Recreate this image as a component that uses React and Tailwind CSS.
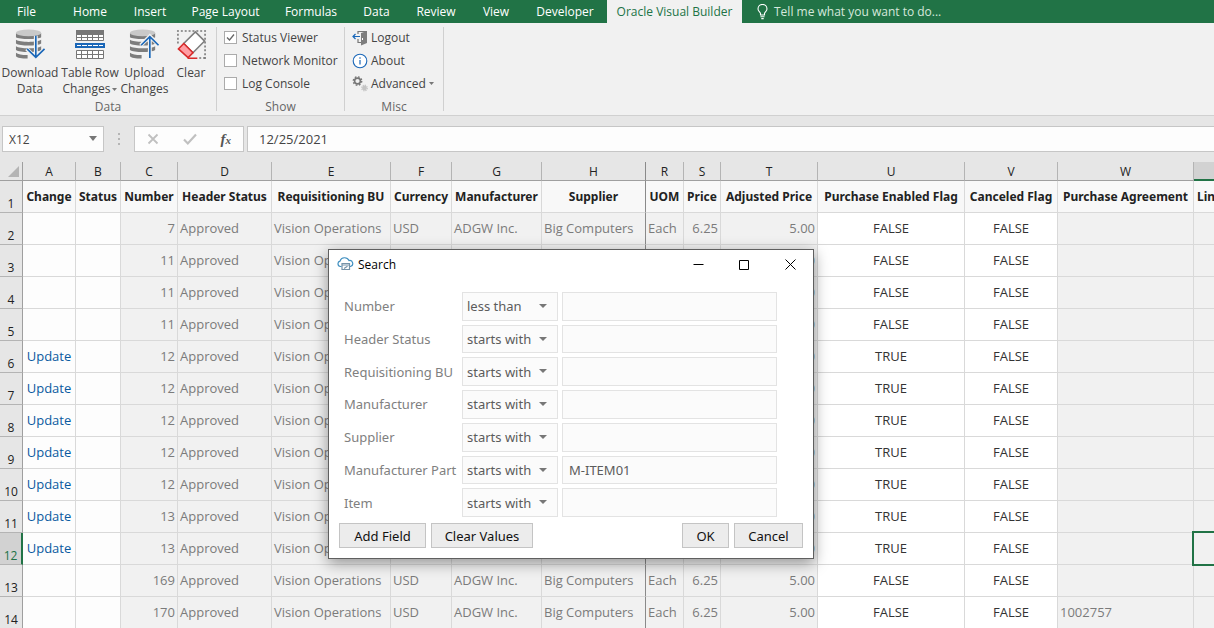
import { useState } from "react";

const TABS = [
  { label: "File", width: "w-[53px] mr-[6px]" },
  { label: "Home", width: "w-[62px]" },
  { label: "Insert", width: "w-[58px]" },
  { label: "Page Layout", width: "w-[93px]" },
  { label: "Formulas", width: "w-[78px]" },
  { label: "Data", width: "w-[53px]" },
  { label: "Review", width: "w-[66px]" },
  { label: "View", width: "w-[54px]" },
  { label: "Developer", width: "w-[84px]" },
  { label: "Oracle Visual Builder", width: "w-[135px]", active: true },
];

// Editable columns are white, read-only columns are gray.
const COLUMNS = [
  { letter: "A", title: "Change", width: "w-[53px]", cell: "bg-[#fdfdfd] text-center text-[#0a5aa0]" },
  { letter: "B", title: "Status", width: "w-[45px]", cell: "bg-[#fdfdfd]" },
  { letter: "C", title: "Number", width: "w-[57px]", cell: "bg-[#f1f1f1] text-right" },
  { letter: "D", title: "Header Status", width: "w-[94px]", cell: "bg-[#f1f1f1]" },
  { letter: "E", title: "Requisitioning BU", width: "w-[119px]", cell: "bg-[#f1f1f1]" },
  { letter: "F", title: "Currency", width: "w-[61px]", cell: "bg-[#f1f1f1]" },
  { letter: "G", title: "Manufacturer", width: "w-[90px]", cell: "bg-[#f1f1f1]" },
  { letter: "H", title: "Supplier", width: "w-[104px]", cell: "bg-[#f1f1f1]", frozen: true },
  { letter: "R", title: "UOM", width: "w-[38px]", cell: "bg-[#f1f1f1]" },
  { letter: "S", title: "Price", width: "w-[37px]", cell: "bg-[#f1f1f1] text-right" },
  { letter: "T", title: "Adjusted Price", width: "w-[97px]", cell: "bg-[#f1f1f1] text-right" },
  { letter: "U", title: "Purchase Enabled Flag", width: "w-[147px]", cell: "bg-white text-center text-[#333333]" },
  { letter: "V", title: "Canceled Flag", width: "w-[93px]", cell: "bg-white text-center text-[#333333]" },
  { letter: "W", title: "Purchase Agreement", width: "w-[136px]", cell: "bg-[#f1f1f1]" },
];

const ROWS = [
  { change: "", number: "7", enabled: "FALSE" },
  { change: "", number: "11", enabled: "FALSE" },
  { change: "", number: "11", enabled: "FALSE" },
  { change: "", number: "11", enabled: "FALSE" },
  { change: "Update", number: "12", enabled: "TRUE" },
  { change: "Update", number: "12", enabled: "TRUE" },
  { change: "Update", number: "12", enabled: "TRUE" },
  { change: "Update", number: "12", enabled: "TRUE" },
  { change: "Update", number: "12", enabled: "TRUE" },
  { change: "Update", number: "13", enabled: "TRUE" },
  { change: "Update", number: "13", enabled: "TRUE" },
  { change: "", number: "169", enabled: "FALSE" },
  { change: "", number: "170", enabled: "FALSE", agreement: "1002757" },
];

const SELECTED_ROW = 12;

const FIELDS = [
  { id: "number", label: "Number", operator: "less than", value: "" },
  { id: "header-status", label: "Header Status", operator: "starts with", value: "" },
  { id: "requisitioning-bu", label: "Requisitioning BU", operator: "starts with", value: "" },
  { id: "manufacturer", label: "Manufacturer", operator: "starts with", value: "" },
  { id: "supplier", label: "Supplier", operator: "starts with", value: "" },
  { id: "manufacturer-part", label: "Manufacturer Part", operator: "starts with", value: "M-ITEM01" },
  { id: "item", label: "Item", operator: "starts with", value: "" },
];

function rowCells(row) {
  return [
    row.change,
    "",
    row.number,
    "Approved",
    "Vision Operations",
    "USD",
    "ADGW Inc.",
    "Big Computers",
    "Each",
    "6.25",
    "5.00",
    row.enabled,
    "FALSE",
    row.agreement || "",
  ];
}

export default function App() {
  return (
    <div className="relative h-screen w-full overflow-hidden bg-[#e6e6e6] font-['Open_Sans',sans-serif] text-[#444444]">
      <TabBar />
      <Ribbon />
      <FormulaBar />
      <Sheet />
      <SearchDialog />
    </div>
  );
}

function TabBar() {
  return (
    <nav className="flex h-[23px] items-stretch bg-[#217346] text-[12px] leading-4 text-white">
      {TABS.map((tab) => (
        <button
          key={tab.label}
          type="button"
          className={`${tab.width} shrink-0 whitespace-nowrap ${tab.active ? "bg-[#f1f1f1] text-[#217346]" : ""}`}
        >
          {tab.label}
        </button>
      ))}
      <button type="button" className="ml-[15px] flex shrink-0 items-center gap-[6px] text-[#d5e8dc]">
        <BulbIcon />
        Tell me what you want to do...
      </button>
    </nav>
  );
}

function Ribbon() {
  return (
    <div className="flex h-[93px] border-b border-[#d0d0d0] bg-[#f1f1f1] pt-1 text-[12px] leading-4">
      <RibbonGroup label="Data" className="w-[217px]">
        <div className="flex">
          <BigButton icon={<DownloadIcon />} lines={["Download", "Data"]} className="w-[60px]" />
          <BigButton icon={<TableIcon />} lines={["Table Row", "Changes"]} menu className="w-[60px]" />
          <BigButton icon={<UploadIcon />} lines={["Upload", "Changes"]} className="w-[49px]" />
          <BigButton icon={<EraserIcon />} lines={["Clear"]} className="w-[44px]" />
        </div>
      </RibbonGroup>
      <RibbonGroup label="Show" className="w-[128px]">
        <div className="flex flex-col pl-[7px]">
          <CheckItem label="Status Viewer" defaultChecked />
          <CheckItem label="Network Monitor" />
          <CheckItem label="Log Console" />
        </div>
      </RibbonGroup>
      <RibbonGroup label="Misc" className="w-[99px]">
        <div className="flex flex-col pl-[7px]">
          <SmallButton icon={<LogoutIcon />} label="Logout" />
          <SmallButton icon={<InfoIcon />} label="About" />
          <SmallButton icon={<GearsIcon />} label="Advanced" menu />
        </div>
      </RibbonGroup>
    </div>
  );
}

function RibbonGroup({ label, className, children }) {
  return (
    <section className={`${className} flex h-[84px] shrink-0 flex-col justify-between border-r border-[#d0d0d0]`}>
      {children}
      <div className="text-center leading-2 text-[#666666]">{label}</div>
    </section>
  );
}

function BigButton({ icon, lines, menu, className }) {
  return (
    <button type="button" className={`${className} flex shrink-0 flex-col items-center whitespace-nowrap pt-[2px]`}>
      {icon}
      <span className="mt-[5px]">{lines[0]}</span>
      <span className="flex items-center gap-[2px]">
        {lines[1]}
        {menu && <Caret className="h-[3px] w-[5px]" />}
      </span>
    </button>
  );
}

function CheckItem({ label, defaultChecked }) {
  return (
    <label className="flex h-[23px] items-center gap-[5px] whitespace-nowrap pb-[2px]">
      <span className="relative h-[13px] w-[13px]">
        <input
          type="checkbox"
          defaultChecked={defaultChecked}
          className="peer block h-[13px] w-[13px] appearance-none border border-[#ababab] bg-white"
        />
        <svg viewBox="0 0 13 13" className="pointer-events-none absolute inset-0 hidden h-[13px] w-[13px] peer-checked:block">
          <path d="M3 6.5 5.5 9 10 3.5" fill="none" stroke="#666" strokeWidth="1.3" />
        </svg>
      </span>
      {label}
    </label>
  );
}

function SmallButton({ icon, label, menu }) {
  return (
    <button type="button" className="flex h-[23px] items-center gap-[3px] whitespace-nowrap pb-[2px]">
      {icon}
      {label}
      {menu && <Caret className="h-[3px] w-[5px]" />}
    </button>
  );
}

function FormulaBar() {
  return (
    <div className="flex h-[46px] items-start pl-[2px] pt-[10px] text-[12px] leading-4">
      <div className="relative">
        <input
          aria-label="Name box"
          defaultValue="X12"
          className="block h-[26px] w-[102px] border border-[#c6c6c6] bg-[#fdfdfd] pl-[6px]"
        />
        <Caret className="absolute right-[7px] top-[10px] h-[5px] w-[8px]" />
      </div>
      <div className="flex h-[26px] w-[30px] flex-col items-center justify-center gap-[3px]">
        <i className="h-[2px] w-[2px] bg-[#b5b5b5]" />
        <i className="h-[2px] w-[2px] bg-[#b5b5b5]" />
        <i className="h-[2px] w-[2px] bg-[#b5b5b5]" />
      </div>
      <div className="flex h-[26px] w-[110px] items-center justify-around border border-[#c6c6c6] bg-[#fdfdfd]">
        <button type="button" aria-label="Cancel entry">
          <svg width="12" height="12" viewBox="0 0 12 12">
            <path d="M1.5 1.5 10.5 10.5M10.5 1.5 1.5 10.5" stroke="#c0c0c0" strokeWidth="1.8" />
          </svg>
        </button>
        <button type="button" aria-label="Enter">
          <svg width="14" height="12" viewBox="0 0 14 12">
            <path d="M1 6.5 4.8 10.4 13 1.5" fill="none" stroke="#c0c0c0" strokeWidth="2.2" />
          </svg>
        </button>
        <button type="button" className="font-['Liberation_Serif',serif] text-[15px] font-bold italic text-[#555555]">
          f<span className="text-[11px]">x</span>
        </button>
      </div>
      <input
        aria-label="Formula"
        defaultValue="12/25/2021"
        className="ml-[3px] h-[26px] min-w-0 flex-1 border border-r-0 border-[#c6c6c6] bg-[#fdfdfd] pl-[11px] text-[13px]"
      />
    </div>
  );
}

function Sheet() {
  return (
    <table className="w-full table-fixed border-separate border-spacing-0 whitespace-nowrap text-[13px] leading-4">
      <colgroup>
        <col className="w-[23px]" />
        {COLUMNS.map((col) => (
          <col key={col.letter} className={col.width} />
        ))}
        <col />
      </colgroup>
      <thead>
        <tr className="h-[19px] text-[12px] text-[#222222]">
          <th className="border-b border-r border-[#9f9f9f] p-0">
            <svg viewBox="0 0 12 12" className="ml-auto mr-[3px] h-[11px] w-[11px]">
              <path d="M12 0V12H0Z" fill="#b4b4b4" />
            </svg>
          </th>
          {COLUMNS.map((col) => (
            <th
              key={col.letter}
              className={`border-b border-r border-b-[#9f9f9f] p-0 pt-[2px] font-normal ${col.frozen ? "border-r-[#8a8a8a]" : "border-r-[#b4b4b4]"}`}
            >
              {col.letter}
            </th>
          ))}
          <th className="border-b-2 border-[#217346] bg-[#d2d2d2] p-0" />
        </tr>
      </thead>
      <tbody>
        <tr className="h-8">
          <RowNumber n={1} />
          {COLUMNS.map((col) => (
            <th
              key={col.letter}
              className={`border-b border-r border-b-[#d9d9d9] bg-[#f8f8f8] p-0 font-['Noto_Sans',sans-serif] text-[12px] font-bold text-[#222222] ${col.frozen ? "border-r-[#8a8a8a]" : "border-r-[#d9d9d9]"}`}
            >
              {col.title}
            </th>
          ))}
          <th className="overflow-hidden border-b border-[#d9d9d9] bg-[#f8f8f8] p-0 pl-[3px] text-left font-['Noto_Sans',sans-serif] text-[12px] font-bold text-[#222222]">
            Lin
          </th>
        </tr>
        {ROWS.map((row, i) => (
          <tr key={i} className="h-8 text-[#7b7b7b]">
            <RowNumber n={i + 2} />
            {rowCells(row).map((text, c) => (
              <td
                key={c}
                className={`border-b border-r border-b-[#d9d9d9] px-[2px] pb-[2px] pt-0 ${COLUMNS[c].cell} ${COLUMNS[c].frozen ? "border-r-[#8a8a8a]" : "border-r-[#d9d9d9]"}`}
              >
                {text}
              </td>
            ))}
            <td className="relative border-b border-[#d9d9d9] bg-[#f1f1f1] p-0">
              {i + 2 === SELECTED_ROW && (
                <div className="absolute -bottom-[2px] -left-[2px] -top-[2px] right-0 z-10 border-y-2 border-l-2 border-[#217346]" />
              )}
            </td>
          </tr>
        ))}
      </tbody>
    </table>
  );
}

function RowNumber({ n }) {
  return (
    <th
      className={`border-b border-b-[#b4b4b4] p-0 align-bottom text-[12px] font-normal ${
        n === SELECTED_ROW
          ? "border-r-2 border-r-[#217346] bg-[#d2d2d2] text-[#217346]"
          : "border-r border-r-[#9f9f9f] text-[#222222]"
      }`}
    >
      {n}
    </th>
  );
}

function SearchDialog() {
  const [fields, setFields] = useState(FIELDS);

  const update = (id, patch) =>
    setFields((list) => list.map((f) => (f.id === id ? { ...f, ...patch } : f)));

  const clearValues = () => setFields((list) => list.map((f) => ({ ...f, value: "" })));

  return (
    <div
      role="dialog"
      aria-label="Search"
      className="absolute left-[328px] top-[249px] z-20 w-[486px] border border-[#5f5f5f] bg-white font-['Noto_Sans',sans-serif] shadow-[0_4px_14px_rgba(0,0,0,0.4)]"
    >
      <header className="flex h-[29px] items-center pl-[8px] text-[12px] text-black">
        <CloudIcon />
        <h2 className="ml-[4px] flex-1 font-['Open_Sans',sans-serif]">Search</h2>
        <WindowButton label="Minimize" d="M0.5 5.5H10.5" />
        <WindowButton label="Maximize" d="M0.5 1.5H9.5V10.5H0.5Z" />
        <WindowButton label="Close" d="M0.5 0.5 10.5 10.5M10.5 0.5 0.5 10.5" />
      </header>
      <div className="mt-[13px] grid h-[225px] grid-rows-7 gap-1 pl-[15px] pr-[36px] text-[13px] leading-4">
        {fields.map((f) => (
          <div key={f.id} className="flex items-stretch">
            <label htmlFor={f.id} className="flex w-[118px] items-center whitespace-nowrap text-[#808080]">
              {f.label}
            </label>
            <div className="relative w-[96px]">
              <select
                aria-label={`${f.label} operator`}
                value={f.operator}
                onChange={(e) => update(f.id, { operator: e.target.value })}
                className="h-full w-full appearance-none border border-[#e3e3e3] bg-[#fbfbfb] pl-[4px] text-[#5c5c5c]"
              >
                <option>starts with</option>
                <option>less than</option>
              </select>
              <Caret className="pointer-events-none absolute right-[11px] top-[12px] h-[4px] w-[8px]" />
            </div>
            <input
              id={f.id}
              value={f.value}
              onChange={(e) => update(f.id, { value: e.target.value })}
              className="ml-1 min-w-0 flex-1 border border-[#e3e3e3] bg-[#fbfbfb] px-[6px] text-[#5c5c5c]"
            />
          </div>
        ))}
      </div>
      <footer className="flex gap-[5px] px-[10px] pb-[10px] pt-[6px] text-[13px] leading-4 text-[#111111]">
        <DialogButton className="w-[87px]">Add Field</DialogButton>
        <DialogButton className="mr-auto w-[102px]" onClick={clearValues}>
          Clear Values
        </DialogButton>
        <DialogButton className="w-[47px]">OK</DialogButton>
        <DialogButton className="w-[69px]">Cancel</DialogButton>
      </footer>
    </div>
  );
}

function DialogButton({ className, onClick, children }) {
  return (
    <button
      type="button"
      onClick={onClick}
      className={`${className} h-[25px] whitespace-nowrap border border-[#c4c4c4] bg-[#ececec]`}
    >
      {children}
    </button>
  );
}

function WindowButton({ label, d }) {
  return (
    <button type="button" aria-label={label} className="flex h-full w-[46px] items-center justify-center">
      <svg width="11" height="11" viewBox="0 0 11 11">
        <path d={d} fill="none" stroke="#000" />
      </svg>
    </button>
  );
}

function Caret({ className }) {
  return (
    <svg viewBox="0 0 8 5" preserveAspectRatio="none" className={className}>
      <path d="M0 0H8L4 5Z" fill="#777" />
    </svg>
  );
}

function BulbIcon() {
  return (
    <svg width="11" height="16" viewBox="0 0 11 16" fill="none" stroke="#fff" strokeWidth="1.1">
      <path d="M3.5 11V9.3C3 8 1 7 1 4.9A4.4 4.4 0 0 1 10 4.9C10 7 8 8 7.5 9.3V11Z" />
      <path d="M3.5 12.8H7.5M4.3 14.6H6.7" />
    </svg>
  );
}

function Cylinder() {
  return (
    <>
      <path d="M1 4V8.5C4 11 24 11 27 8.5V4Z" fill="#7d7d7d" />
      <ellipse cx="14" cy="4" rx="13" ry="3.4" fill="#c9c9c9" />
      <path d="M1 11.2C5 14 23 14 27 11.2V15C23 17.8 5 17.8 1 15Z" fill="#7d7d7d" />
      <path d="M1 17.8C5 20.6 23 20.6 27 17.8V21.6C23 24.4 5 24.4 1 21.6Z" fill="#7d7d7d" />
      <path d="M1 24.4C3 26.2 8 27 13 26.9V30.5C7 30.5 2 29.6 1 28Z" fill="#7d7d7d" />
    </>
  );
}

function DownloadIcon() {
  return (
    <svg width="31" height="31" viewBox="0 0 32 32" fill="none">
      <Cylinder />
      <path d="M21.5 7V29M12 20.5 21.5 29.5 31 20.5" stroke="#f1f1f1" strokeWidth="4" />
      <path d="M21.5 7V29M12.5 20.5 21.5 29.3 30.5 20.5" stroke="#1a67b8" strokeWidth="1.7" />
    </svg>
  );
}

function UploadIcon() {
  return (
    <svg width="31" height="31" viewBox="0 0 32 32" fill="none">
      <Cylinder />
      <path d="M21.5 30V8M12 17 21.5 7.5 31 17" stroke="#f1f1f1" strokeWidth="4" />
      <path d="M21.5 30V8M12.5 16.8 21.5 7.8 30.5 16.8" stroke="#1a67b8" strokeWidth="1.7" />
    </svg>
  );
}

function TableIcon() {
  return (
    <svg width="31" height="31" viewBox="0 0 31 31" fill="none">
      <path d="M1 2H29V12H1ZM1 21H29V30H1Z" fill="#fff" />
      <path d="M1 1H29V6H1Z" fill="#777" />
      <path d="M1.5 2.5H28.5V11.5H1.5ZM1.5 8.5H28.5M6.5 5V12M12.5 5V12M17.5 5V12M23.5 5V12" stroke="#777" />
      <path d="M1 15H29V18H1Z" fill="#fff" stroke="#1a67b8" strokeWidth="2" />
      <path d="M6.5 14V19M12.5 14V19M17.5 14V19M23.5 14V19" stroke="#1a67b8" />
      <path d="M1.5 21.5H28.5V29.5H1.5ZM1.5 25.5H28.5M6.5 21V30M12.5 21V30M17.5 21V30M23.5 21V30" stroke="#777" />
    </svg>
  );
}

function EraserIcon() {
  return (
    <svg width="31" height="31" viewBox="0 0 32 32" fill="none">
      <path d="M1 2H31" stroke="#777" strokeWidth="1.6" strokeDasharray="2 2" />
      <path d="M2 5V15M30 5V31M24 30H31" stroke="#777" strokeWidth="1.6" strokeDasharray="2 2" />
      <path d="M20 3 29.5 12.5 17.5 24.5 8 15Z" fill="#fff" stroke="#7d7d7d" strokeWidth="1.6" />
      <path d="M8 15 17.5 24.5 12.5 29.5 2.5 20.5Z" fill="#ff9da3" stroke="#d92b2b" strokeWidth="1.6" />
      <path d="M12 30.2H22" stroke="#d92b2b" strokeWidth="1.6" />
    </svg>
  );
}

function LogoutIcon() {
  return (
    <svg width="16" height="16" viewBox="0 0 16 16" fill="none">
      <path d="M6 4V1.5H15M6 9V12.5H9" stroke="#777" strokeWidth="1.2" />
      <path d="M9 3 15 1V13L9 15.5Z" fill="#7d7d7d" />
      <path d="M10.5 8V10" stroke="#fff" />
      <path d="M8 6.5H1M3.5 4 1 6.5 3.5 9" stroke="#1a67b8" strokeWidth="1.2" />
    </svg>
  );
}

function InfoIcon() {
  return (
    <svg width="16" height="16" viewBox="0 0 16 16" fill="none">
      <circle cx="8" cy="8" r="6.8" fill="#fff" stroke="#1a67b8" strokeWidth="1.1" />
      <path d="M8 7V11.5M8 4.3V5.7" stroke="#1a67b8" strokeWidth="1.2" />
    </svg>
  );
}

function GearsIcon() {
  return (
    <svg width="16" height="16" viewBox="0 0 16 16" fill="none">
      <circle cx="5.5" cy="5" r="2.9" stroke="#777" strokeWidth="1.6" />
      <circle cx="5.5" cy="5" r="4.2" stroke="#777" strokeWidth="1.4" strokeDasharray="1.7 1.6" />
      <circle cx="12.5" cy="12" r="2.4" fill="#c4c4c4" />
      <circle cx="12.5" cy="12" r="2.8" stroke="#c4c4c4" strokeWidth="1.2" strokeDasharray="1.2 1" />
    </svg>
  );
}

function CloudIcon() {
  return (
    <svg width="17" height="15" viewBox="0 0 17 15" fill="none" stroke="#3f8fc0" strokeWidth="1.2">
      <path d="M4.5 9.5H3.4A2.7 2.7 0 0 1 3 4.2 4.8 4.8 0 0 1 12 3.6 3 3 0 0 1 13.4 9.5H12.8" />
      <path d="M5 12.5V6.5H12.5V12.5Z" fill="#fff" stroke="#7592a8" />
      <path d="M5 8H12.5M7 11.5 10.5 9.2" stroke="#7592a8" />
    </svg>
  );
}
